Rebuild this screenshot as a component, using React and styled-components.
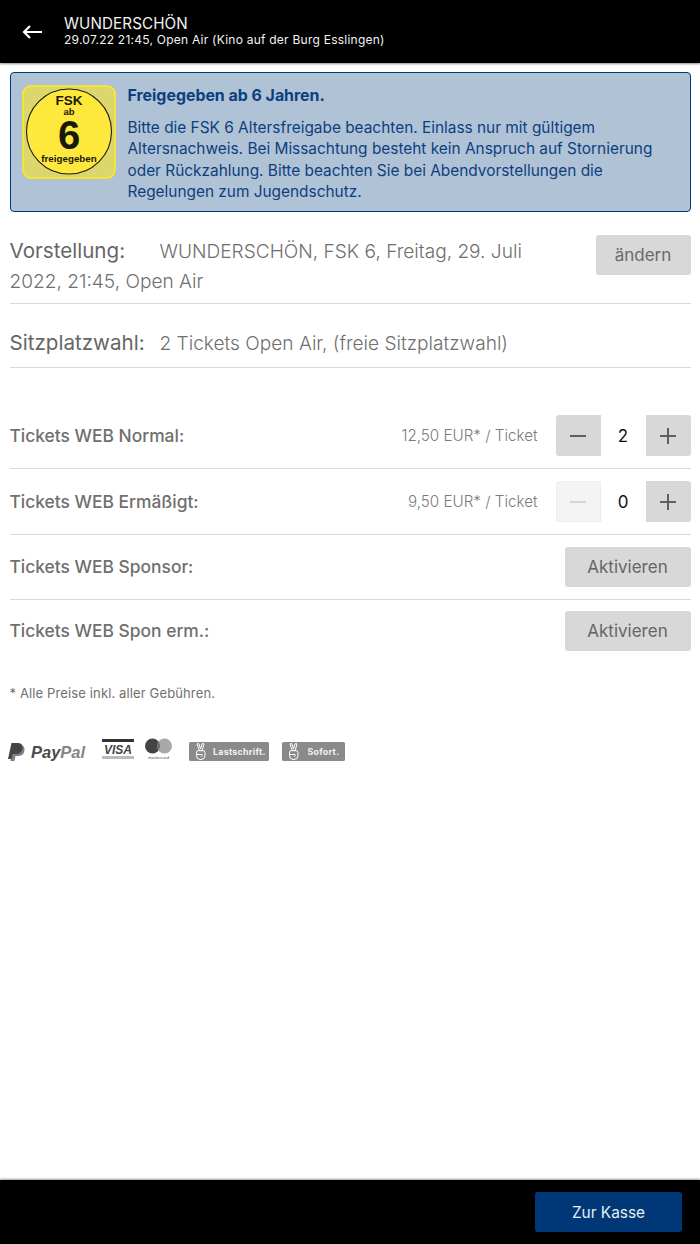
import React from "react";
import styled, { createGlobalStyle } from "styled-components";

const Global = createGlobalStyle`
  html, body { margin: 0; padding: 0; background: #fff; }
  body { font-family: Inter, "Liberation Sans", sans-serif; }
  * { box-sizing: border-box; }
`;
const Page = styled.div`
  display: flex; flex-direction: column; height: 1244px; overflow: hidden; background: #fff;
`;
const Header = styled.header`
  height: 63px; background: #000; color: #fff; display: flex; align-items: center;
  box-shadow: 0 1px 2px rgba(0,0,0,.45); flex: none;
`;
const Back = styled.div`
  width: 64px; padding-left: 22px; display: flex; align-items: center;
`;
const HeaderText = styled.div`
  display: flex; flex-direction: column; color: #f2f2f2;
`;
const HeaderTitle = styled.div`
  font-size: 15.2px; line-height: 17px; letter-spacing: .1px; font-weight: 400;
`;
const HeaderSub = styled.div`
  font-size: 12px; line-height: 16px; letter-spacing: .24px;
`;
const Content = styled.main`
  flex: 1; padding: 9px 9.5px 0;
`;
const Notice = styled.section`
  height: 140px; background: #b0c2d6; border: 1px solid #003877; border-radius: 4px;
  padding: 12px 12px 0 11.5px; display: flex; gap: 11.5px; color: #0c3f7e;
`;
const NoticeBody = styled.div`
  flex: 1; min-width: 0;
`;
const NoticeTitle = styled.div`
  font-size: 15.9px; font-weight: 700; line-height: 22px; margin-bottom: 10px; color: #0c3f7e;
`;
const NoticeText = styled.div`
  font-size: 15.4px; line-height: 21.4px;
`;
const Summary = styled.section`
  padding: 24px 0 7px; border-bottom: 1px solid #d9d9d9; color: #6f6f6f; font-weight: 300;
  font-size: 19.1px; line-height: 29.5px; min-height: ${p => p.$h}px;
  &::after { content: ""; display: block; clear: both; }
`;
const SeatSummary = styled(Summary)`
  padding-top: 24px;
`;
const SummaryLabel = styled.span`
  display: inline-block; width: 150px; font-size: 20.6px; color: #666; font-weight: 400;
`;
const ChangeButton = styled.button`
  float: right; margin: -1px 0 0 20px; width: 95px; height: 40px; border: 0; border-radius: 3px;
  background: #d8d8d8; color: #6a6a6a; font: 17px Inter, sans-serif;
`;
const Tickets = styled.section`
  margin-top: 35px;
`;
const Row = styled.div`
  height: ${p => p.$h}px; display: flex; align-items: ${p => p.$last ? "flex-start" : "center"};
  border-bottom: ${p => p.$last ? "0" : "1px solid #d9d9d9"};
  padding-top: ${p => p.$pt || 0}px;
`;
const RowLabel = styled.div`
  flex: 1; font-size: 17.4px; font-weight: 500; color: #6f6f6f; line-height: 40px;
`;
const Price = styled.div`
  font-size: 15.2px; color: #7b7b7b; margin-right: 18px; font-weight: 300;
`;
const Stepper = styled.div`
  display: flex; align-items: center; width: 135px;
`;
const StepButton = styled.div`
  width: 45px; height: 41px; display: flex; align-items: center; justify-content: center;
  background: ${p => p.$off ? "#f4f4f4" : "#d8d8d8"};
  border: ${p => p.$off ? "1px solid #ececec" : "0"};
  border-radius: ${p => p.$right ? "0 3px 3px 0" : "3px 0 0 3px"};
`;
const Qty = styled.div`
  width: 45px; text-align: center; font-size: 17px; color: #111;
`;
const Activate = styled.button`
  width: 126px; height: 40px; border: 0; border-radius: 3px; background: #d8d8d8;
  color: #666; font: 17px Inter, sans-serif;
`;
const Note = styled.p`
  margin: 32px 0 0; font-size: 13px; line-height: 18px; color: #6f6f6f; letter-spacing: .13px;
`;
const Payments = styled.div`
  margin: 35px 0 0 -9.5px; display: flex; align-items: center; height: 28px;
`;
const Footer = styled.footer`
  height: 64px; background: #000; flex: none; display: flex; justify-content: flex-end;
  align-items: flex-start; padding: 12px 18px 0 0; box-shadow: 0 -1px 2px rgba(0,0,0,.4);
`;
const Checkout = styled.button`
  width: 147px; height: 40px; border: 0; border-radius: 3px; background: #003877; color: #e8edf3;
  font: 15.4px Inter, sans-serif;
`;

const Arrow = () => (
  <svg width="20" height="14" viewBox="0 0 20 14" fill="none" stroke="#fff" strokeWidth="2.2">
    <path d="M20 7H2M8 1 2 7l6 6" />
  </svg>
);
const Minus = ({ c = "#5f5f5f" }) => (
  <svg width="16" height="16" viewBox="0 0 16 16"><rect y="7" width="16" height="2" fill={c} /></svg>
);
const Plus = () => (
  <svg width="16" height="16" viewBox="0 0 16 16" fill="#5f5f5f">
    <rect y="7" width="16" height="2" /><rect x="7" width="2" height="16" />
  </svg>
);
const FskBadge = () => (
  <svg width="94" height="94" viewBox="0 0 94 94" style={{ flex: "none" }}>
    <rect x="1" y="1" width="92" height="92" rx="8" fill="#dcd76c" stroke="#ffeb1a" strokeWidth="1.6" />
    <circle cx="47" cy="46.5" r="42.5" fill="#ffe83c" stroke="#1c1a10" strokeWidth="1.1" />
    <g fill="#1a180c" fontFamily="Liberation Sans, sans-serif" fontWeight="700" textAnchor="middle">
      <text x="47" y="20" fontSize="13.5">FSK</text>
      <text x="47" y="30" fontSize="9.5">ab</text>
      <text x="47" y="64" fontSize="40">6</text>
      <text x="47" y="76.5" fontSize="9.8">freigegeben</text>
    </g>
  </svg>
);
const Peace = () => (
  <g fill="none" stroke="#fff" strokeWidth="1" strokeLinecap="round" strokeLinejoin="round">
    <path d="M-1.5 -0.5-4-7.5q1.2-1.2 2 0l1.5 5 1.5-5q1-1.2 2 0L1 -0.5" />
    <path d="M-4.5 1q0-2 2-2h4q2.5 0 2.5 2.2V4q0 4-4 4h-1q-3.5 0-3.5-3.5z" />
    <path d="M-4 3h5q1 1-.5 2" />
  </g>
);
const PaymentLogos = () => (
  <svg width="346" height="28" viewBox="0 0 346 28">
    <path d="M13 8h7q5 .5 4.500 5c-.5 4.500-3 6-7 6h-2l-1 5h-4z" fill="#7f7f7f" />
    <path d="M11.500 6h7q4.500.5 4 5c-.7 4.500-3 6-7 6h-3l-1 5H8z" fill="#444" />
    <text x="31" y="21" fontFamily="Liberation Sans, sans-serif" fontStyle="italic" fontWeight="700" fontSize="16.5" fill="#4a4a4a">Pay<tspan fill="#858585">Pal</tspan></text>
    <rect x="102" y="2" width="32" height="3" fill="#333" />
    <text x="118" y="16.5" textAnchor="middle" fontFamily="Liberation Sans, sans-serif" fontStyle="italic" fontWeight="700" fontSize="12" fill="#444">VISA</text>
    <rect x="102" y="19" width="32" height="3" fill="#bbb" />
    <circle cx="152.500" cy="9" r="7.5" fill="#444" />
    <circle cx="164.500" cy="9" r="7.5" fill="#a8a8a8" />
    <path d="M158.500 4.500a7.5 7.5 0 0 1 0 9a7.5 7.5 0 0 1 0-9z" fill="#707070" />
    <text x="158.500" y="21.5" textAnchor="middle" fontFamily="Liberation Sans, sans-serif" fontSize="4.200" fill="#555">mastercard</text>
    <rect x="189" y="5" width="80" height="19" rx="1.5" fill="#8a8a8a" />
    <g transform="translate(201 14.5)"><Peace /></g>
    <text x="213" y="18" fontFamily="Inter, sans-serif" fontWeight="700" fontSize="8.8" letterSpacing=".3" fill="#f3f3f3">Lastschrift.</text>
    <rect x="282" y="5" width="63" height="19" rx="1.5" fill="#8a8a8a" />
    <g transform="translate(294 14.5)"><Peace /></g>
    <text x="307.500" y="18" fontFamily="Inter, sans-serif" fontWeight="700" fontSize="8.8" letterSpacing=".3" fill="#f3f3f3">Sofort.</text>
  </svg>
);

const Stepped = ({ qty, off }) => (
  <Stepper>
    <StepButton $off={off}><Minus c={off ? "#d4d4d4" : "#5f5f5f"} /></StepButton>
    <Qty>{qty}</Qty>
    <StepButton $right><Plus /></StepButton>
  </Stepper>
);

export default function App() {
  return (
    <Page>
      <Global />
      <Header>
        <Back><Arrow /></Back>
        <HeaderText>
          <HeaderTitle>WUNDERSCHÖN</HeaderTitle>
          <HeaderSub>29.07.22 21:45, Open Air (Kino auf der Burg Esslingen)</HeaderSub>
        </HeaderText>
      </Header>
      <Content>
        <Notice>
          <FskBadge />
          <NoticeBody>
            <NoticeTitle>Freigegeben ab 6 Jahren.</NoticeTitle>
            <NoticeText>
              Bitte die FSK 6 Altersfreigabe beachten. Einlass nur mit gültigem Altersnachweis. Bei Missachtung besteht kein Anspruch auf Stornierung oder Rückzahlung. Bitte beachten Sie bei Abendvorstellungen die Regelungen zum Jugendschutz.
            </NoticeText>
          </NoticeBody>
        </Notice>
        <Summary $h={92}>
          <ChangeButton>ändern</ChangeButton>
          <SummaryLabel>Vorstellung:</SummaryLabel>
          WUNDERSCHÖN, FSK 6, Freitag, 29. Juli 2022, 21:45, Open Air
        </Summary>
        <SeatSummary $h={64}>
          <SummaryLabel>Sitzplatzwahl:</SummaryLabel>
          2 Tickets Open Air, (freie Sitzplatzwahl)
        </SeatSummary>
        <Tickets>
          <Row $h={66}>
            <RowLabel>Tickets WEB Normal:</RowLabel>
            <Price>12,50 EUR* / Ticket</Price>
            <Stepped qty={2} />
          </Row>
          <Row $h={66}>
            <RowLabel>Tickets WEB Ermäßigt:</RowLabel>
            <Price>9,50 EUR* / Ticket</Price>
            <Stepped qty={0} off />
          </Row>
          <Row $h={65}>
            <RowLabel>Tickets WEB Sponsor:</RowLabel>
            <Activate>Aktivieren</Activate>
          </Row>
          <Row $h={52} $last $pt={11}>
            <RowLabel>Tickets WEB Spon erm.:</RowLabel>
            <Activate>Aktivieren</Activate>
          </Row>
        </Tickets>
        <Note>* Alle Preise inkl. aller Gebühren.</Note>
        <Payments><PaymentLogos /></Payments>
      </Content>
      <Footer><Checkout>Zur Kasse</Checkout></Footer>
    </Page>
  );
}
